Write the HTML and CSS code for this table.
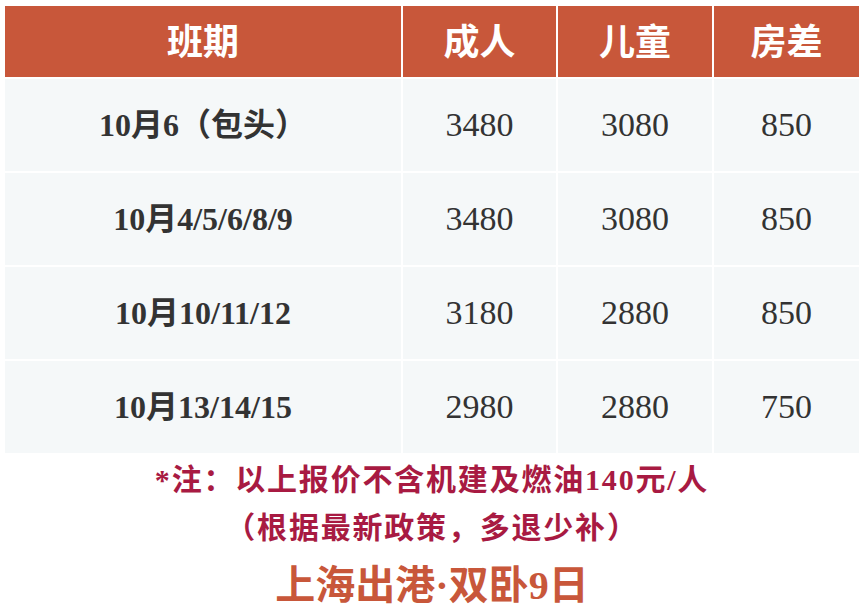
FILE: index.html
```html
<!DOCTYPE html>
<html lang="zh">
<head>
<meta charset="utf-8">
<title>班期价格</title>
<link rel="stylesheet" href="styles.css">
</head>
<body>
<div class="page">
  <div class="table">
    <div class="cell head">班期</div>
    <div class="cell head">成人</div>
    <div class="cell head">儿童</div>
    <div class="cell head">房差</div>

    <div class="cell date">10月6（包头）</div>
    <div class="cell num">3480</div>
    <div class="cell num">3080</div>
    <div class="cell num">850</div>

    <div class="cell date">10月4/5/6/8/9</div>
    <div class="cell num">3480</div>
    <div class="cell num">3080</div>
    <div class="cell num">850</div>

    <div class="cell date">10月10/11/12</div>
    <div class="cell num">3180</div>
    <div class="cell num">2880</div>
    <div class="cell num">850</div>

    <div class="cell date">10月13/14/15</div>
    <div class="cell num">2980</div>
    <div class="cell num">2880</div>
    <div class="cell num">750</div>
  </div>
  <div class="notes">
    <p class="note">*注：以上报价不含机建及燃油140元/人</p>
    <p class="note">（根据最新政策，多退少补）</p>
    <p class="title">上海出港·双卧9日</p>
  </div>
</div>
</body>
</html>
```

FILE: styles.css
```css
html, body {
  margin: 0;
  padding: 0;
  background: #ffffff;
}

.page {
  width: 868px;
  padding: 6px 9px 0 5px;
  box-sizing: border-box;
}

.table {
  display: grid;
  grid-template-columns: 396px 153px 154px 145px;
  grid-template-rows: 71px 92px 92px 92px 92px;
  gap: 2px;
}

.cell {
  display: flex;
  align-items: center;
  justify-content: center;
  white-space: nowrap;
}

.head {
  background: #c8573a;
  color: #ffffff;
  font-family: "Noto Sans CJK SC", sans-serif;
  font-weight: 700;
  font-size: 36px;
  line-height: 1;
  padding-bottom: 6px;
  box-sizing: border-box;
}

.date,
.num {
  background: #f5f8f9;
  color: #333333;
  font-family: "Liberation Serif", "Noto Sans CJK SC", serif;
  line-height: 1;
}

.date {
  font-weight: 700;
  font-size: 32px;
}

.num {
  font-size: 34px;
}

.notes {
  display: flex;
  flex-direction: column;
  align-items: center;
  margin-top: 3px;
}

.note {
  margin: 0;
  color: #a81a42;
  font-family: "Liberation Serif", "Noto Sans CJK SC", serif;
  font-weight: 700;
  font-size: 30px;
  line-height: 48px;
  letter-spacing: 1.8px;
}

.title {
  margin: 0;
  color: #c8573a;
  font-family: "Liberation Serif", "Noto Sans CJK SC", serif;
  font-weight: 700;
  font-size: 40px;
  line-height: 68px;
}
```
